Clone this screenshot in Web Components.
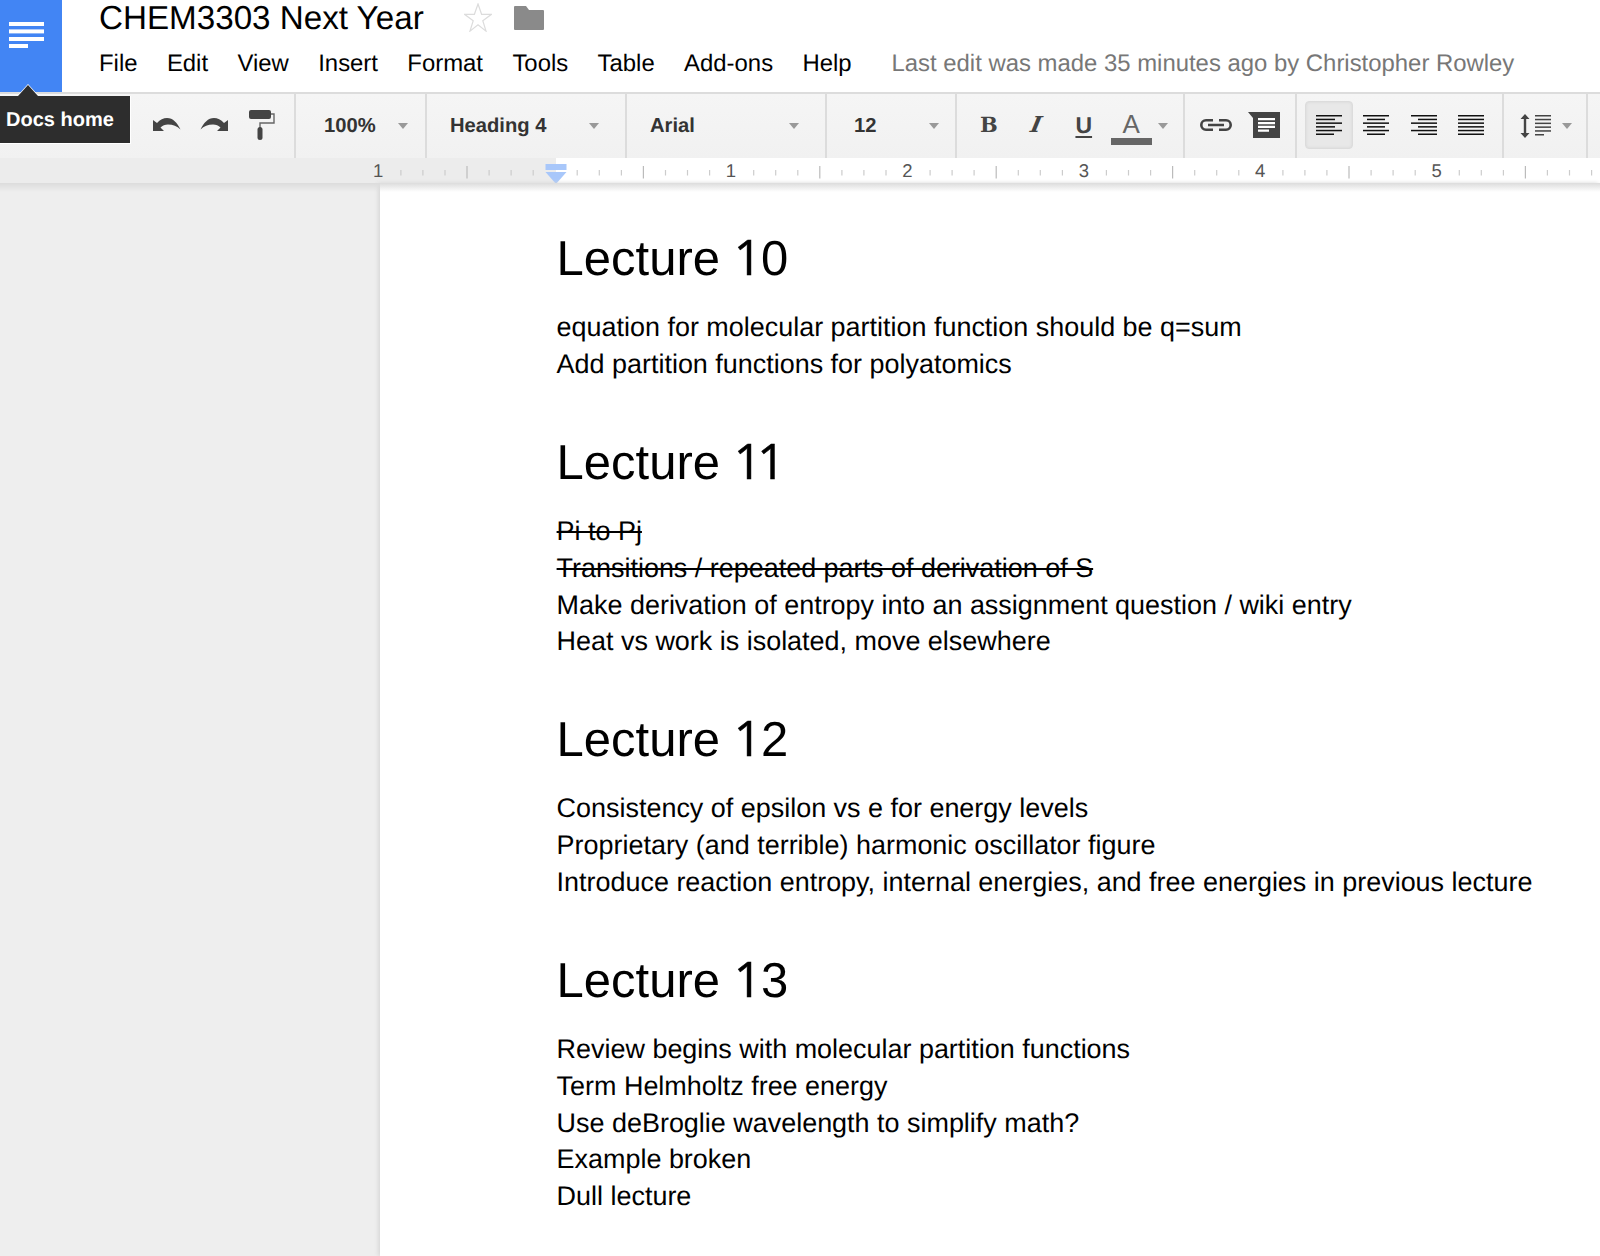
<!DOCTYPE html>
<html>
<head>
<meta charset="utf-8">
<title>CHEM3303 Next Year</title>
<style>
  html, body { margin: 0; height: 100%; background: #fff; overflow: hidden; }
  body { font-family: "Liberation Sans", Arial, sans-serif; text-rendering: geometricPrecision; }
</style>
</head>
<body>
<docs-app>
  <docs-header slot="header" title-text="CHEM3303 Next Year" status="Last edit was made 35 minutes ago by Christopher Rowley">
    <span>File</span><span>Edit</span><span>View</span><span>Insert</span><span>Format</span><span>Tools</span><span>Table</span><span>Add-ons</span><span>Help</span>
  </docs-header>
  <docs-toolbar slot="toolbar"></docs-toolbar>
  <docs-ruler slot="ruler"></docs-ruler>
  <docs-page slot="page">
    <doc-section heading="Lecture 10">
      <div>equation for molecular partition function should be q=sum</div>
      <div>Add partition functions for polyatomics</div>
    </doc-section>
    <doc-section heading="Lecture 11">
      <div><s>Pi to Pj</s></div>
      <div><s>Transitions / repeated parts of derivation of S</s></div>
      <div>Make derivation of entropy into an assignment question / wiki entry</div>
      <div>Heat vs work is isolated, move elsewhere</div>
    </doc-section>
    <doc-section heading="Lecture 12">
      <div>Consistency of epsilon vs e for energy levels</div>
      <div>Proprietary (and terrible) harmonic oscillator figure</div>
      <div>Introduce reaction entropy, internal energies, and free energies in previous lecture</div>
    </doc-section>
    <doc-section heading="Lecture 13">
      <div>Review begins with molecular partition functions</div>
      <div>Term Helmholtz free energy</div>
      <div>Use deBroglie wavelength to simplify math?</div>
      <div>Example broken</div>
      <div>Dull lecture</div>
    </doc-section>
  </docs-page>
</docs-app>

<script>
(() => {
  const FONT = '"Liberation Sans", Arial, sans-serif';

  class DocsApp extends HTMLElement {
    constructor() {
      super();
      this.attachShadow({ mode: "open" });
      this.shadowRoot.innerHTML = `
        <style>
          :host { display: flex; flex-direction: column; width: 1600px; height: 1256px; overflow: hidden; position: relative; }
          .main { flex: 1; display: flex; min-height: 0; position: relative; background: #eeeeee; }
          .shadow { position: absolute; left: 0; right: 0; top: 0; height: 9px; background: linear-gradient(#dcdcdc, rgba(220,220,220,0)); z-index: 2; }
          .side { width: 380px; flex: none; }
        </style>
        <slot name="header"></slot>
        <slot name="toolbar"></slot>
        <slot name="ruler"></slot>
        <div class="main">
          <div class="shadow"></div>
          <div class="side"></div>
          <slot name="page"></slot>
        </div>
      `;
    }
  }

  class DocsHeader extends HTMLElement {
    constructor() {
      super();
      this.attachShadow({ mode: "open" });
      this.shadowRoot.innerHTML = `
        <style>
          :host { display: flex; height: 92px; background: #fff; position: relative; flex: none; }
          .logo { width: 62px; flex: none; background: #4285f4; position: relative; }
          .logo svg { position: absolute; left: 9px; top: 22px; }
          .body { padding-left: 37px; flex: 1; display: flex; flex-direction: column; }
          .top { display: flex; align-items: center; height: 36px; }
          .title { font: 33.200px/36px ${FONT}; color: #000; white-space: nowrap; padding-top: 2px; }
          .star { margin: -2px 0 0 40px; }
          .folder { margin-left: 22px; }
          .menu { display: flex; align-items: center; height: 30px; margin-top: 13px; font: 23.900px/30px ${FONT}; color: #000; }
          ::slotted(span) { margin-right: 29.400px; }
          .status { color: #777; margin-left: 10.500px; white-space: nowrap; }
        </style>
        <div class="logo">
          <svg width="35" height="26" viewBox="0 0 35 26" fill="#fff">
            <rect width="35" height="4"/><rect y="7.400" width="35" height="4"/><rect y="15" width="35" height="4"/><rect y="22" width="19" height="4"/>
          </svg>
        </div>
        <div class="body">
          <div class="top">
            <span class="title"></span>
            <svg class="star" width="28" height="29" viewBox="0 0 28 29"><path d="M14 1l3.600 10.300H27.500l-8.700 6.500 3.200 10.300-8-6.300-8 6.300 3.200-10.300L.5 11.300h9.900z" fill="#fff" stroke="#dcdcdc" stroke-width="1.200"/></svg>
            <svg class="folder" width="30" height="24" viewBox="0 0 30 24"><path d="M1 0h11l3 4h14a1 1 0 0 1 1 1v18a1 1 0 0 1-1 1H1a1 1 0 0 1-1-1V1a1 1 0 0 1 1-1z" fill="#8a8a8a"/></svg>
          </div>
          <div class="menu"><slot></slot><span class="status"></span></div>
        </div>
      `;
    }
    connectedCallback() {
      this.shadowRoot.querySelector(".title").textContent = this.getAttribute("title-text");
      this.shadowRoot.querySelector(".status").textContent = this.getAttribute("status");
    }
  }

  class TbGroup extends HTMLElement {
    constructor() {
      super();
      this.attachShadow({ mode: "open" });
      this.shadowRoot.innerHTML = `
        <style>
          :host { display: flex; align-items: center; flex: none; height: 100%; box-sizing: border-box; border-right: 2px solid #dcdcdc; }
          :host([last]) { border-right: 0; flex: 1; }
        </style>
        <slot></slot>
      `;
    }
    connectedCallback() {
      this.style.width = (this.getAttribute("w") || 0) + "px";
      this.style.paddingLeft = (this.getAttribute("pad") || 0) + "px";
    }
  }

  class TbSelect extends HTMLElement {
    constructor() {
      super();
      this.attachShadow({ mode: "open" });
      this.shadowRoot.innerHTML = `
        <style>
          :host { display: flex; align-items: center; justify-content: space-between; width: 100%; font: bold 20.200px/24px ${FONT}; color: #333; }
          .arrow { width: 0; height: 0; border: 5px solid transparent; border-top: 6px solid #999; border-bottom: 0; }
        </style>
        <span><slot></slot></span><span class="arrow"></span>
      `;
    }
  }

  class TbBtn extends HTMLElement {
    constructor() {
      super();
      this.attachShadow({ mode: "open" });
      this.shadowRoot.innerHTML = `
        <style>
          :host { display: flex; align-items: center; justify-content: center; flex: none; width: 47.500px; height: 48px; box-sizing: border-box; margin-top: -2px; color: #444; }
          :host([active]) { background: #e8e8e8; border: 1.500px solid #dcdcdc; border-radius: 4px; box-shadow: inset 0 0 3px #d4d4d4; }
        </style>
        <slot></slot>
      `;
    }
  }

  const alignIcon = (rows) => `<svg width="26" height="20" viewBox="0 0 26 20" fill="#111">${
    rows.map(([x, w], i) => `<rect x="${x}" y="${i * 3.700}" width="${w}" height="1.500"/>`).join("")
  }</svg>`;

  class DocsToolbar extends HTMLElement {
    constructor() {
      super();
      this.attachShadow({ mode: "open" });
      const undo = "M0 2v11h11L7.500 9.500C9.500 7.500 12 6.500 15 6.500c5 0 9 1.800 12.500 5C24 4.500 20 0 14 0 10.500 0 7 1.500 4 5z";
      this.shadowRoot.innerHTML = `
        <style>
          :host { display: flex; height: 66px; flex: none; box-sizing: border-box; border-top: 2px solid #dcdcdc; background: linear-gradient(#f5f5f5, #f1f1f1); position: relative; }
          .b { font: bold 21px/24px "DejaVu Serif", serif; }
          .i { font: italic 700 22px/24px "DejaVu Serif", serif; display: inline-block; transform: skewX(-12deg); }
          .u { font: bold 23px/24px ${FONT}; text-decoration: underline; text-underline-offset: 3px; }
          .a { font: 26px/26px ${FONT}; color: #666; display: flex; flex-direction: column; align-items: center; margin-top: 5px; }
          .a i { display: block; width: 41px; height: 7px; background: #666; margin-top: 1px; }
          .mini { width: 0; height: 0; border: 5px solid transparent; border-top: 6px solid #999; border-bottom: 0; flex: none; }
          .tip { position: absolute; left: 0; top: 2px; width: 131px; height: 48px; box-sizing: border-box; background: #2d2d2d; border: solid #fff; border-width: 0 1.500px 1.500px 0; color: #fff; font: bold 20px/48px ${FONT}; padding-left: 6px; z-index: 5; }
          .tip::before { content: ""; position: absolute; left: 18px; top: -11px; width: 0; height: 0; border: 10px solid transparent; border-top: 0; border-bottom: 11px solid #2d2d2d; filter: drop-shadow(0 -1px 0 #fff); }
        </style>
        <div class="tip">Docs home</div>
        <tb-group w="296" pad="143">
          <tb-btn><svg width="28" height="14" viewBox="0 0 28 14"><path d="${undo}" fill="#444"/></svg></tb-btn>
          <tb-btn><svg width="28" height="14" viewBox="0 0 28 14"><path d="${undo}" fill="#444" transform="matrix(-1 0 0 1 28 0)"/></svg></tb-btn>
          <tb-btn><svg width="26" height="30" viewBox="0 0 26 30">
            <rect width="22" height="9" rx="2" fill="#444"/>
            <path d="M22 4h3v9H11v5" fill="none" stroke="#666" stroke-width="1.400"/>
            <rect x="8.500" y="17" width="5" height="13" rx="2.500" fill="#444"/>
          </svg></tb-btn>
        </tb-group>
        <tb-group w="131" pad="28" style="padding-right:17px"><tb-select>100%</tb-select></tb-group>
        <tb-group w="200" pad="23" style="padding-right:26px"><tb-select>Heading 4</tb-select></tb-group>
        <tb-group w="200" pad="23" style="padding-right:26px"><tb-select>Arial</tb-select></tb-group>
        <tb-group w="130" pad="27" style="padding-right:16px"><tb-select>12</tb-select></tb-group>
        <tb-group w="228" pad="8">
          <tb-btn><span class="b">B</span></tb-btn>
          <tb-btn><span class="i">I</span></tb-btn>
          <tb-btn><span class="u">U</span></tb-btn>
          <tb-btn><span class="a">A<i></i></span></tb-btn>
          <span class="mini" style="margin-left:3px"></span>
        </tb-group>
        <tb-group w="112" pad="7">
          <tb-btn><svg width="34" height="12" viewBox="0 0 34 12" fill="none" stroke="#444" stroke-width="2.600"><path d="M14 1.300H7a4.700 4.700 0 0 0 0 9.400h7M20 1.300h7a4.700 4.700 0 0 1 0 9.400h-7M9 6h16" /></svg></tb-btn>
          <tb-btn style="margin-left:1px"><svg width="32" height="26" viewBox="0 0 32 26">
            <path d="M0 0h32v26H5V6z" fill="#444"/>
            <path d="M10 6h17v2.200H10zM10 10h17v2.200H10zM10 13.800h17V16H10zM10 17.500h11v2.200H10z" fill="#fff"/>
          </svg></tb-btn>
        </tb-group>
        <tb-group w="207" pad="8">
          <tb-btn active>${alignIcon([[0,26],[0,19],[0,26],[0,19],[0,26],[0,18]])}</tb-btn>
          <tb-btn>${alignIcon([[0,26],[4,18],[0,26],[4,18],[0,26],[4,18]])}</tb-btn>
          <tb-btn>${alignIcon([[0,26],[7,19],[0,26],[7,19],[0,26],[7,19]])}</tb-btn>
          <tb-btn>${alignIcon([[0,26],[0,26],[0,26],[0,26],[0,26],[0,26]])}</tb-btn>
        </tb-group>
        <tb-group w="84" pad="16">
          <svg width="32" height="24" viewBox="0 0 32 24" fill="#444" style="flex:none">
            <path d="M5 0l4.500 5H6.200v14h3.300L5 24 .5 19h3.300V5H.5z"/>
            <rect x="15" y="1" width="16" height="1.500"/><rect x="15" y="4.800" width="16" height="1.500"/><rect x="15" y="8.600" width="16" height="1.500"/><rect x="15" y="12.400" width="16" height="1.500"/><rect x="15" y="16.200" width="16" height="1.500"/><rect x="15" y="20" width="9" height="1.500"/>
          </svg>
          <span class="mini" style="margin-left:10px"></span>
        </tb-group>
        <tb-group last></tb-group>
      `;
    }
  }

  // ruler is a drawing: ticks at 22.05px (eighth inch), digits every 176.4px
  class DocsRuler extends HTMLElement {
    constructor() {
      super();
      this.attachShadow({ mode: "open" });
      const zero = 554.6, step = 176.4 / 8;
      let marks = "";
      for (let i = -8; i <= 47; i++) {
        const x = +(zero + i * step).toFixed(1);
        if (i % 8 === 0) {
          if (i === 0) continue;
          marks += `<text x="${x}" y="19" text-anchor="middle">${Math.abs(i / 8)}</text>`;
        } else if (i % 4 === 0) {
          marks += `<rect x="${x}" y="8" width="1.200" height="12.500" fill="#bbb"/>`;
        } else {
          marks += `<rect x="${x}" y="12" width="1.200" height="5.500" fill="#ccc"/>`;
        }
      }
      this.shadowRoot.innerHTML = `
        <style>
          :host { display: block; height: 25px; flex: none; background: linear-gradient(to right, #ececec 556px, #fff 556px); box-sizing: border-box; position: relative; }
          svg { display: block; position: absolute; left: 0; top: 0; }
          text { font: 18.500px ${FONT}; fill: #555; }
          .marker { position: absolute; left: 545px; top: 5px; }
        </style>
        <svg width="1600" height="25">${marks}</svg>
        <svg class="marker" width="22" height="21" viewBox="0 0 22 21">
          <rect x="0.500" y="1" width="21" height="6" fill="#a8c7fa"/>
          <path d="M0.500 9h21L11 21z" fill="#a8c7fa"/>
        </svg>
      `;
    }
  }

  class DocsPage extends HTMLElement {
    constructor() {
      super();
      this.attachShadow({ mode: "open" });
      this.shadowRoot.innerHTML = `
        <style>
          :host { display: block; flex: 1; background: #fff; padding: 47.800px 0 0 176.600px; box-shadow: -2px 0 4px #d8d8d8; font-family: ${FONT}; color: #000; }
        </style>
        <slot></slot>
      `;
    }
  }

  class DocSection extends HTMLElement {
    constructor() {
      super();
      this.attachShadow({ mode: "open" });
      this.shadowRoot.innerHTML = `
        <style>
          :host { display: block; margin-bottom: 52px; font: 26.950px/36.730px ${FONT}; white-space: nowrap; }
          h2 { font: 49px/56.400px ${FONT}; margin: 0 0 22px; }
          /* Arial's 1 has no foot and Liberation Sans's has, so take the 1 from Open Sans */
          .one { font-family: "Open Sans", sans-serif; line-height: 0; letter-spacing: -0.800px; -webkit-text-stroke: 0.500px #000; }
          .kern { letter-spacing: -4.400px; }
        </style>
        <h2></h2>
        <slot></slot>
      `;
    }
    connectedCallback() {
      const [word, num] = this.getAttribute("heading").split(" ");
      const digits = [...num].map((d, i) => {
        if (d !== "1") return d;
        return `<span class="one${num[i + 1] === "1" ? " kern" : ""}">1</span>`;
      });
      this.shadowRoot.querySelector("h2").innerHTML = `${word} ${digits.join("")}`;
    }
  }

  customElements.define("docs-app", DocsApp);
  customElements.define("docs-header", DocsHeader);
  customElements.define("tb-group", TbGroup);
  customElements.define("tb-select", TbSelect);
  customElements.define("tb-btn", TbBtn);
  customElements.define("docs-toolbar", DocsToolbar);
  customElements.define("docs-ruler", DocsRuler);
  customElements.define("docs-page", DocsPage);
  customElements.define("doc-section", DocSection);
})();
</script>
</body>
</html>
